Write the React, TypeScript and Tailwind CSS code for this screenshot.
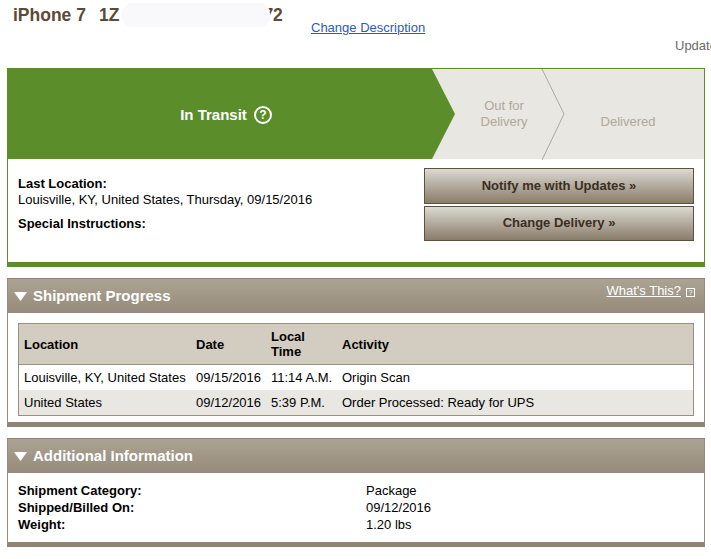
const ArrowTitle = ({ title, link }: { title: string; link?: boolean }) => (
  <div className="h-[35px] border-t border-[#8f8472] bg-gradient-to-b from-[#aca393] to-[#968b7a] flex items-start pl-[6px] pr-[9px] text-white">
    <svg width="13" height="9" viewBox="0 0 13 9" className="mt-[13px] mr-[6px]">
      <path d="M0 0H13L6.5 9Z" fill="#fff" />
    </svg>
    <h2 className="mt-[7px] text-[15px] leading-[20px] font-bold">{title}</h2>
    {link && (
      <div className="ml-auto mt-[3px] flex items-center text-[13px] leading-[17px]">
        <span className="underline">What's This?</span>
        <span className="ml-[5px] mt-[3px] w-[9px] h-[9px] border border-white text-[7px] leading-[7px] text-center">?</span>
      </div>
    )}
  </div>
);

const App = () => {
  return (
    <div className="w-[711px] h-[559px] overflow-hidden bg-white text-[13px] text-black font-['Liberation_Sans',Arial,sans-serif]">
      <div className="h-[68px] relative">
        <div className="flex pl-[13px] pt-[5px] text-[17.5px] leading-[20px] font-bold text-[#5c4a36]">
          <span>iPhone 7</span>
          <span className="ml-[13px]">1Z</span>
          <span className="w-[144px]" />
          <span>72</span>
        </div>
        <div className="absolute left-[122px] top-[3px] w-[148px] h-[24px] rounded-[10px] bg-[#f9f9fc]" />
        <a className="absolute left-[311px] top-[19px] text-[#2a5bc4] underline leading-[17px]">Change Description</a>
        <span className="absolute left-[675px] top-[37px] text-[#6b6b6b] leading-[17px] whitespace-nowrap">Updated</span>
      </div>

      <section className="ml-[7px] mr-[6px] h-[199px] border-x border-[#5b8e2b] border-b-[5px] border-b-[#5b8e2b]">
        <div className="relative h-[91px] bg-[#e8e7e2] border-t border-r border-[#5b8e2b] -ml-px -mr-px flex">
          <div className="w-[449px] bg-[#5b8e2b] [clip-path:polygon(0_0,425px_0,448px_50%,425px_100%,0_100%)] flex items-center justify-center pr-[11px] pt-[2px] gap-[7px] text-white font-bold text-[15px]">
            In Transit
            <span className="w-[18px] h-[18px] rounded-full border-2 border-white text-[12px] leading-[14px] text-center">?</span>
          </div>
          <div className="w-[96px] pt-[29px] text-center leading-[16px] text-[#b1a79a]">
            Out for<br />Delivery
          </div>
          <div className="w-[152px] pt-[44px] text-center leading-[17px] text-[#b1a79a]">Delivered</div>
          <svg width="24" height="91" viewBox="0 0 24 91" className="absolute left-[534px] top-0">
            <path d="M1 0L23 45L1 91" fill="none" stroke="#b1a79a" />
          </svg>
        </div>
        <div className="flex justify-between pl-[10px] pr-[10px] pt-[9px]">
          <div className="leading-[17px] pt-[7px]">
            <p className="font-bold">Last Location:</p>
            <p className="-mt-px">Louisville, KY, United States, Thursday, 09/15/2016</p>
            <p className="mt-[7px] font-bold">Special Instructions:</p>
          </div>
          <div className="w-[270px] flex flex-col gap-[2px] font-bold text-[#3c2f22]">
            <button className="h-[36px] border border-[#5d5140] bg-gradient-to-b from-[#dcdad2] to-[#8a7d6b]">Notify me with Updates »</button>
            <button className="h-[35px] pb-[2px] border border-[#5d5140] bg-gradient-to-b from-[#dcdad2] to-[#8a7d6b]">Change Delivery »</button>
          </div>
        </div>
      </section>

      <section className="ml-[7px] mr-[6px] mt-[11px] h-[149px] border-x border-[#968b7a] border-b-[5px] border-b-[#8f8472]">
        <ArrowTitle title="Shipment Progress" link />
        <div className="mx-[10px] mt-[10px] border border-[#9a907f]">
          <div className="grid grid-cols-[172px_75px_71px_1fr] h-[41px] items-center bg-[#d3ccc0] border-b border-[#9a907f] pl-[5px] font-bold leading-[15px]">
            <span>Location</span>
            <span>Date</span>
            <span>Local<br />Time</span>
            <span>Activity</span>
          </div>
          <div className="grid grid-cols-[172px_75px_71px_1fr] h-[25px] items-center pl-[5px]">
            <span>Louisville, KY, United States</span>
            <span>09/15/2016</span>
            <span>11:14 A.M.</span>
            <span>Origin Scan</span>
          </div>
          <div className="grid grid-cols-[172px_75px_71px_1fr] h-[25px] items-center pl-[5px] bg-[#e8e7e2]">
            <span>United States</span>
            <span>09/12/2016</span>
            <span>5:39 P.M.</span>
            <span>Order Processed: Ready for UPS</span>
          </div>
        </div>
      </section>

      <section className="ml-[7px] mr-[6px] mt-[11px] h-[109px] border-x border-[#968b7a] border-b-[5px] border-b-[#8f8472]">
        <ArrowTitle title="Additional Information" />
        <div className="grid grid-cols-[348px_1fr] pl-[10px] pt-[9px] leading-[17px]">
          <span className="font-bold">Shipment Category:</span>
          <span>Package</span>
          <span className="font-bold">Shipped/Billed On:</span>
          <span>09/12/2016</span>
          <span className="font-bold">Weight:</span>
          <span>1.20 lbs</span>
        </div>
      </section>
    </div>
  );
};

export default App;
